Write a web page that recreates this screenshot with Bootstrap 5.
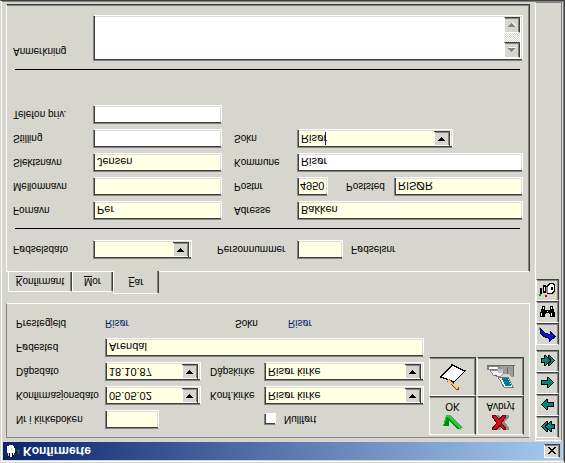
<!DOCTYPE html>
<html lang="no">
<head>
<meta charset="utf-8">
<meta name="viewport" content="width=device-width, initial-scale=1">
<title>Konfirmerte</title>
<link href="https://cdn.jsdelivr.net/npm/bootstrap@5.3.0/dist/css/bootstrap.min.css" rel="stylesheet">
<style>
:root{--face:#d6d6ce;--dk:#404040;--sh:#848484;--cream:#ffffe4;--navy:#0a246a}
body{background:var(--face);color:#000;font:10px/12px "Liberation Sans",Arial,sans-serif}
/* the whole window is mirrored top to bottom */
.win{transform:scaleY(-1);min-height:100vh;padding:1px;background:var(--face);border:1px solid;border-color:#d6d6ce var(--dk) var(--dk) #d6d6ce;box-shadow:inset 1px 1px #fff,inset -1px -1px var(--sh)}
.win svg{display:block;shape-rendering:crispEdges;flex:none}
.titlebar{height:18px;margin:1px 1px 0 1px;padding:0 2px 0 3px;background:linear-gradient(90deg,#0a246a,#a6caf0);color:#fff;font-size:12px;font-weight:700;gap:2px}
.raised{background:var(--face);border:1px solid;border-color:#fff var(--dk) var(--dk) #fff;box-shadow:inset -1px -1px var(--sh);padding:0;color:#000;border-radius:0}
.closer{width:16px;height:14px}
.workarea{padding:4px 5px 2px 4px}
.tools{width:28px;margin:1px 1px 0 0;padding-top:2px;border:1px solid;border-color:#fff var(--sh) var(--sh) #fff}
.tools .raised{width:23px;height:22px}
.tools .later{margin-top:5px}
.groupbox{border:1px solid;border-color:var(--sh) #fff #fff var(--sh);padding:2px 4px 10px 9px}
.topgrid{display:grid;grid-template-columns:89px 105px 54px minmax(0,1fr);grid-auto-rows:19px;row-gap:5px;align-items:center;padding-top:6px}
.wide{grid-column:span 3}
.half{grid-column:span 2}
.fld{display:block;height:19px;min-width:0;border:1px solid;border-color:var(--sh) #fff #fff var(--sh);box-shadow:inset 1px 1px var(--dk),inset -1px -1px #dcdcd4;background-color:var(--cream);color:#000;padding:0 3px;font-size:11px;line-height:15px;border-radius:0;outline:0}
.fld.plain{background-color:#fff}
select.fld{appearance:none;padding-left:3px;background-repeat:no-repeat;background-position:right 2px center;background-image:url("data:image/svg+xml,%3Csvg xmlns='http://www.w3.org/2000/svg' width='16' height='15' shape-rendering='crispEdges'%3E%3Cpath fill='%23404040' d='M0 0h16v15H0z'/%3E%3Cpath fill='%23fff' d='M0 0h15v14H0z'/%3E%3Cpath fill='%23848484' d='M1 1h14v13H1z'/%3E%3Cpath fill='%23d6d6ce' d='M1 1h13v12H1z'/%3E%3Cpath d='M4 5h7v1H4zM5 6h5v1H5zM6 7h3v1H6zM7 8h1v1H7z'/%3E%3C/svg%3E")}
.datefld{width:96px}
.num{width:54px}
.postnr{width:31px;flex:none;padding:0 2px}
.poststed{width:48px;margin-left:18px;flex:none}
.tick{appearance:none;width:12px;height:12px;margin:0;border:1px solid;border-color:var(--sh) #fff #fff var(--sh);box-shadow:inset 1px 1px var(--dk);background:#fff}
.place{color:var(--navy);width:53px}
.indent{padding-left:25px}
.cmds{display:grid;grid-template-columns:48px 48px;grid-auto-rows:39px;margin-left:5px;align-self:start}
.cmds .raised{display:flex;flex-direction:column;align-items:center;justify-content:center;gap:3px;margin-right:1px;line-height:11px}
.pages{margin-top:9px}
.tabs{padding-left:2px}
.pagetab{height:20px;border:1px solid;border-color:#fff var(--dk) transparent #fff;border-bottom:0;border-radius:2px 2px 0 0;box-shadow:inset -1px 0 var(--sh);background:var(--face);padding:0;width:64px;color:#000;font-size:10px}
.pagetab.mid{width:41px}
.pagetab.on{height:23px;margin-bottom:-1px;z-index:1;width:46px;position:relative}
.sheet{border:1px solid;border-color:#fff var(--dk) var(--dk) #fff;box-shadow:inset -1px -1px var(--sh);padding:12px 6px 7px 6px}
.lab{width:80px;flex:none}
.rule{height:1px;margin:11px 3px 8px 2px;background:#000;border:0;opacity:1}
.rule.low{margin-top:35px}
.grid2{display:grid;grid-template-columns:80px 129px 75px minmax(0,1fr);grid-auto-rows:19px;row-gap:5px;align-items:center}
.grid2 .second{padding-left:12px}
.caret{position:absolute;left:28px;top:3px;width:1px;height:13px;background:var(--navy)}
.memo{height:46px;border:1px solid;border-color:var(--sh) #fff #fff var(--sh);box-shadow:inset 1px 1px var(--dk),inset -1px -1px #dcdcd4;background:#fff;padding:2px 2px 1px 2px}
.memo textarea{border:0;resize:none;outline:0;background:transparent;overflow:hidden;font-size:11px}
.scroller{width:16px;background:conic-gradient(#fff 25%,#d6d6ce 0 50%,#fff 0 75%,#d6d6ce 0) 0 0/2px 2px}
.scroller .raised{width:16px;height:16px}
</style>
</head>
<body>
<div class="win d-flex flex-column">
  <header class="titlebar d-flex align-items-center">
    <svg width="15" height="14"><path fill="#000" d="M2 1h6v5H2z"/><path fill="#fff" d="M1 5h8v5H8v2H7v1H3v-1H1zM4 1h2v5H4zM7 3h1v2H7z"/><path fill="#e2dc60" d="M2 2h1v3H2zM5 7h1v3H5z"/><path fill="#d00" d="M11 4h3v1h-3z"/><path fill="#0a8a30" d="M12 5h1v2h-1zM11 7h3v1h-3z"/></svg>
    <span class="ms-0">Konfirmerte</span>
    <button type="button" class="raised closer ms-auto d-flex align-items-center justify-content-center" aria-label="Lukk"><svg width="8" height="7"><path d="M0 0h2v1h1v1h2V1h1V0h2v1H7v1H6v1H5v1h1v1h1v1h1v1H6V6H5V5H3v1H2v1H0V6h1V5h1V4h1V3H2V2H1V1H0z"/></svg></button>
  </header>
  <div class="d-flex flex-grow-1">
    <main class="workarea flex-grow-1 d-flex flex-column">
      <section class="groupbox d-flex">
        <div class="topgrid flex-grow-1">
          <label for="nr">Nr i kirkeboken</label><input id="nr" class="fld num">
          <span></span><div class="d-flex align-items-center"><input type="checkbox" class="tick" id="nf"><label for="nf" class="ms-2">Nullført</label></div>
          <label for="kd">Konfirmasjonsdato</label><select id="kd" class="fld datefld"><option>05.05.02</option></select>
          <label for="kk">Konf.kirke</label><select id="kk" class="fld w-100"><option>Risør kirke</option></select>
          <label for="dd">Dåpsdato</label><select id="dd" class="fld datefld"><option>18.10.87</option></select>
          <label for="dk">Dåpskirke</label><select id="dk" class="fld w-100"><option>Risør kirke</option></select>
          <label for="fs">Fødested</label><input id="fs" class="fld wide" value="Arendal">
          <span>Prestegjeld</span><span class="place">Risør</span>
          <div class="half d-flex indent"><span class="place text-black">Sokn</span><span class="place">Risør</span></div>
        </div>
        <div class="cmds">
          <button type="button" class="raised"><svg width="20" height="15"><path fill="#8c8c8c" d="M7 11L17 2h3L8 15H5z"/><path fill="#123a9c" d="M5 11L16 1h1L7 13z"/><path fill="#008a10" d="M1 4h5v5l9-8v2L5 14H3z"/><path fill="#00e020" d="M0 4h1l3 9L17 0h1v2L6 15H3z"/></svg>OK</button>
          <button type="button" class="raised"><svg width="17" height="15"><path fill="#8c8c8c" d="M4 0h4l3 4 3-4h3v2l-4 6 4 5v2h-4l-3-4-3 4H4l4-7z"/><path fill="#700" d="M0 0h5l3 4 3-4h3v2l-4 5 4 6v2h-4l-3-4-3 4H0v-2l4-6-4-5z"/><path fill="#d31217" d="M1 1h3l4 5 3-5h2L9 7l4 7h-2L7 9l-3 5H1l4-7z"/></svg>Avbryt</button>
          <button type="button" class="raised" aria-label="Notat"><svg width="26" height="27"><path fill="#fff" stroke="#000" stroke-width="1.4" d="M12 25l13-6L14 8 1 13z"/><path stroke="#704030" stroke-width="3" d="M8 10L18 1"/><path stroke="#ffc67a" stroke-width="2" d="M8 10l9-8"/><path fill="#ffe000" d="M16 1h2v2h-2z"/><path fill="#d00" d="M18 0h1v2h-1z"/></svg></button>
          <button type="button" class="raised" aria-label="Skriv ut"><svg width="28" height="23"><path fill="#9c9c9c" d="M13 14h8l3-3h3v12H13z"/><path fill="#848484" d="M0 18h13v5H0z"/><path fill="#6c6c6c" d="M0 22h28v1H0zM20 14h1v7h-1zM26 12h1v10h-1z"/><path fill="#fff" d="M2 19h9v2H2z"/><path fill="#eee" stroke="#888" d="M3 18l3-5 7-2 4 4-4 3z"/><path fill="#c0c0c0" d="M11 15h5v4h-5z"/><path fill="#fff" stroke="#777" d="M11 11h10l5-10H17z"/><path stroke="#00789c" stroke-width="1.4" d="M15 9h6M16 7h6M17 5h6M18 3h6"/><path fill="#c000c0" d="M8 12h2v1H8z"/></svg></button>
        </div>
      </section>
      <section class="pages d-flex flex-column flex-grow-1">
        <div class="tabs d-flex align-items-end" role="tablist">
          <button type="button" class="pagetab" role="tab"><u>K</u>onfirmant</button>
          <button type="button" class="pagetab mid" role="tab"><u>M</u>or</button>
          <button type="button" class="pagetab on" role="tab" aria-selected="true"><u>F</u>ar</button>
        </div>
        <div class="sheet flex-grow-1">
          <div class="d-flex align-items-center">
            <label class="lab" for="fd">Fødselsdato</label><select id="fd" class="fld" style="width:99px"><option></option></select>
            <label class="lab indent" for="pn" style="width:105px">Personnummer</label><input id="pn" class="fld" style="width:46px"><span class="ms-2">Fødselsnr</span>
          </div>
          <hr class="rule">
          <div class="grid2">
            <label for="fn">Fornavn</label><input id="fn" class="fld" value="Per">
            <label class="second" for="ad">Adresse</label><input id="ad" class="fld" value="Bakken">
            <label for="mn">Mellomnavn</label><input id="mn" class="fld">
            <label class="second" for="po">Postnr</label>
            <div class="d-flex align-items-center"><input id="po" class="fld postnr" value="4950"><label for="ps" class="poststed">Poststed</label><input id="ps" class="fld flex-grow-1" value="RISØR"></div>
            <label for="sn">Slektsnavn</label><input id="sn" class="fld" value="Jensen">
            <label class="second" for="ko">Kommune</label><input id="ko" class="fld plain" value="Risør">
            <label for="st">Stilling</label><input id="st" class="fld plain">
            <label class="second" for="so">Sokn</label><div class="position-relative"><select id="so" class="fld" style="width:156px"><option>Risør</option></select><span class="caret"></span></div>
            <label for="tp">Telefon priv.</label><input id="tp" class="fld plain">
          </div>
          <hr class="rule low">
          <div class="d-flex">
            <label class="lab pt-1" for="an">Anmerkning</label>
            <div class="memo d-flex flex-grow-1"><textarea id="an" class="flex-grow-1 p-0"></textarea>
              <div class="scroller d-flex flex-column justify-content-between">
                <button type="button" class="raised d-flex align-items-center justify-content-center" aria-label="Opp"><svg width="8" height="5"><path fill="#fff" d="M1 4h7v1H1z"/><path fill="#848484" d="M3 0h1v1H3zM2 1h3v1H2zM1 2h5v1H1zM0 3h7v1H0z"/></svg></button>
                <button type="button" class="raised d-flex align-items-center justify-content-center" aria-label="Ned"><svg width="8" height="5"><path fill="#fff" d="M7 1h1v1H7zM6 2h1v1H6zM5 3h1v1H5zM4 4h1v1H4z"/><path fill="#848484" d="M0 0h7v1H0zM1 1h5v1H1zM2 2h3v1H2zM3 3h1v1H3z"/></svg></button>
              </div>
            </div>
          </div>
        </div>
      </section>
    </main>
    <svg width="0" height="0" class="position-absolute" aria-hidden="true"><defs>
      <g id="arrow"><path d="M6 0h2v1h1v1h1v1h1v1h1v1h1v1h-1v1h-1v1h-1v1H9v1H8v1H6V8H0V3h6z"/><path fill="#008484" d="M7 1h1v1h1v1h1v1h1v1h1v1h-1v1h-1v1H9v1H8v1H7V7H1V4h6z"/></g>
      <g id="twin"><path d="M3 0h2v1h1v1h1V0h2v1h1v1h1v1h1v1h1v1h1v1h-1v1h-1v1h-1v1h-1v1H9v1H7V9H6v1H5v1H3V8H0V3h3z"/><path fill="#008484" d="M4 1h1v1h1v1h1v1h1v1h1v1H8v1H7v1H6v1H5v1H4V7H1V4h3zM8 1h1v1h1v1h1v1h1v1h1v1h-1v1h-1v1h-1v1H9v1H8V8h1V7h1V4H9V3H8z"/></g>
    </defs></svg>
    <nav class="tools d-flex flex-column">
      <button type="button" class="raised d-flex align-items-center justify-content-center" aria-label="Første"><svg width="14" height="11"><use href="#twin" transform="matrix(-1 0 0 1 14 0)"/></svg></button>
      <button type="button" class="raised d-flex align-items-center justify-content-center" aria-label="Forrige"><svg width="13" height="11"><use href="#arrow" transform="matrix(-1 0 0 1 13 0)"/></svg></button>
      <button type="button" class="raised d-flex align-items-center justify-content-center" aria-label="Neste"><svg width="13" height="11"><use href="#arrow"/></svg></button>
      <button type="button" class="raised d-flex align-items-center justify-content-center" aria-label="Siste"><svg width="14" height="11"><use href="#twin"/></svg></button>
      <button type="button" class="raised later d-flex align-items-center justify-content-center" aria-label="Gå til"><svg width="17" height="16"><path fill="#8c8c8c" d="M0 15l1-6 4-3 5-1v3L5 10z"/><path fill="#000060" d="M1 15V9l3-4 6-2V0l7 5-6 6V8L6 9z"/><path fill="#1414c4" d="M2 12V9l3-3 6-2V2l4 3-4 4V7L6 8z"/></svg></button>
      <button type="button" class="raised d-flex align-items-center justify-content-center" aria-label="Søk"><svg width="15" height="12"><path d="M0 1h5v3h1v1h3V4h1V1h5v5h-1v3h-1v3h-3V8H5v4H2V9H1V6H0z"/><path fill="#fff" d="M3 9h1v2H3zM11 9h1v2h-1zM1 2h1v3H1zM11 2h1v3h-1zM7 6h1v1H7z"/></svg></button>
      <button type="button" class="raised d-flex align-items-center justify-content-center" aria-label="Vis"><svg width="17" height="15"><path d="M8 3h5l3 3v6l-2 2h-4l-3-3zM1 3h2v6H1zM4 4h3v8H4z"/><path fill="#fff" d="M9 4h3l3 3v5l-2 1h-2L9 11zM5 6h1v4H5z"/><path fill="#8c8c8c" d="M7 4h2v6H7z"/><path d="M12 7h2v3h-2z"/><path fill="#00a000" d="M0 1h2v2H0z"/><path fill="#e00000" d="M6 0h2v2H6z"/><path fill="#e8e000" d="M14 2h2v2h-2z"/></svg></button>
    </nav>
  </div>
</div>
</body>
</html>
